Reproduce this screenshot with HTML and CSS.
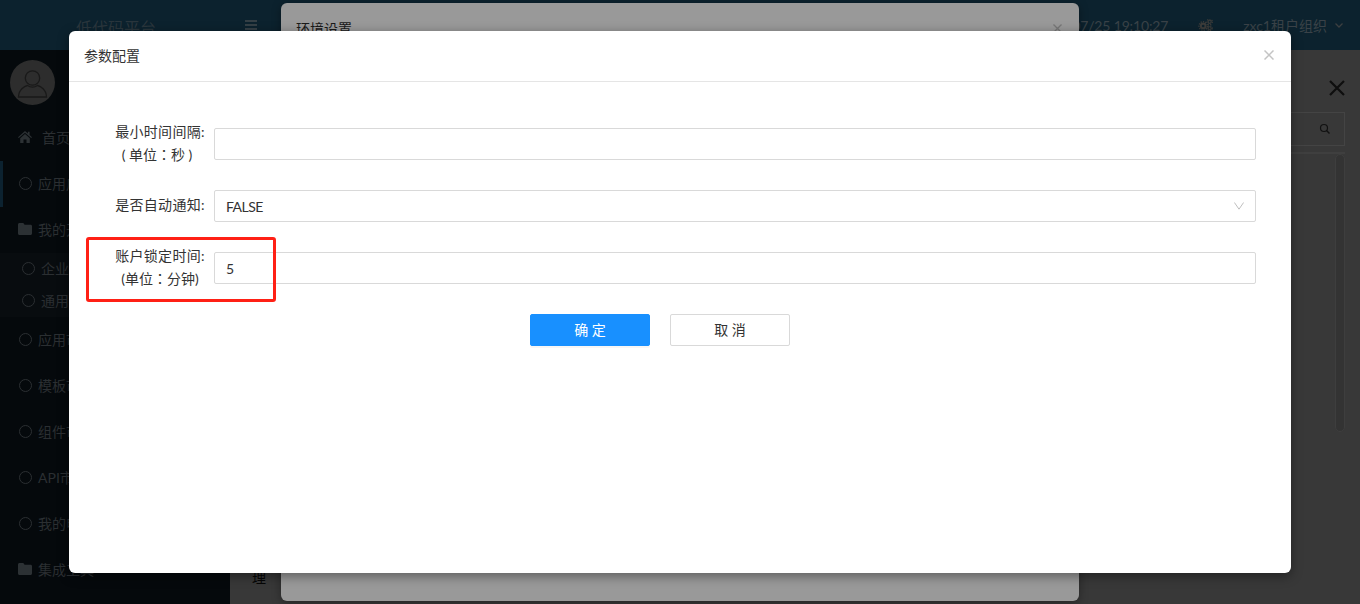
FILE: index.html
```html
<!DOCTYPE html>
<html lang="zh-CN">
<head>
<meta charset="utf-8">
<title>参数配置</title>
<link rel="stylesheet" href="styles.css">
</head>
<body>
<div class="app">
  <header class="topbar">
    <div class="logo">低代码平台</div>
    <div class="burger"><i></i><i></i><i></i></div>
    <div class="spacer"></div>
    <div class="clock">07/25 19:10:27</div>
    <svg class="gear" viewBox="0 0 16 13" width="15" height="12"><g fill="#3c3c3a"><circle cx="5.5" cy="7.500" r="3.600"/><circle cx="12.500" cy="3" r="2.300"/><circle cx="12.500" cy="10" r="2.100"/></g><g fill="none" stroke="#3c3c3a" stroke-width="1.400" stroke-dasharray="1.400 1.200"><circle cx="5.5" cy="7.500" r="4.600"/><circle cx="12.500" cy="3" r="2.900"/><circle cx="12.500" cy="10" r="2.700"/></g><circle cx="5.5" cy="7.500" r="1.400" fill="#0c222e"/><circle cx="12.500" cy="3" r="1" fill="#0c222e"/><circle cx="12.500" cy="10" r="1" fill="#0c222e"/></svg>
    <div class="tenant">zxc1租户组织</div>
    <svg class="tenant-arrow" viewBox="0 0 8 5" width="8" height="5"><path d="M.5.500L4 4 7.500.500" fill="none" stroke="#3c3f40" stroke-width="1.300"/></svg>
  </header>
  <div class="main">
    <aside class="sidebar">
      <div class="user">
        <svg class="avatar" viewBox="0 0 45 45" width="45" height="45"><circle cx="22.500" cy="22.500" r="22.500" fill="#2d2d2d"/><g fill="none" stroke="#191919" stroke-width="1.300"><circle cx="22.500" cy="18" r="7.200"/><path d="M8.500 37c0-7 6-11 9-11.500 3 2 7 2 10 0 3 .5 9 4.500 9 11.500z"/></g></svg>
      </div>
      <nav class="nav">
        <div class="nav-item home"><svg class="ico" viewBox="0 0 14 12" width="14" height="12"><path d="M7 0L0 6.200l.8.800L7 1.800 13.200 7l.8-.8-2.400-2.100V.8h-1.700v1.800zM2.200 7.200V12h3.300V8.500h3V12h3.300V7.200L7 3z" fill="#2c3134"/></svg><span>首页</span></div>
        <div class="nav-item active"><span class="ring"></span><span>应用广场</span></div>
        <div class="nav-item folder"><svg class="ico" viewBox="0 0 14 12" width="14" height="12"><path d="M1.500 0h3.800l1.300 1.700h5.900c.8 0 1.500.6 1.500 1.400v7.400c0 .8-.7 1.500-1.500 1.500h-11C.7 12 0 11.300 0 10.500v-9C0 .7.700 0 1.500 0z" fill="#2c3134"/></svg><span>我的开发</span></div>
        <div class="subnav">
          <div class="sub-item"><span class="ring"></span><span>企业应用</span></div>
          <div class="sub-item"><span class="ring"></span><span>通用应用</span></div>
        </div>
        <div class="nav-item"><span class="ring"></span><span>应用市场</span></div>
        <div class="nav-item"><span class="ring"></span><span>模板市场</span></div>
        <div class="nav-item"><span class="ring"></span><span>组件市场</span></div>
        <div class="nav-item"><span class="ring"></span><span>API市场</span></div>
        <div class="nav-item"><span class="ring"></span><span>我的申请</span></div>
        <div class="nav-item folder"><svg class="ico" viewBox="0 0 14 12" width="14" height="12"><path d="M1.500 0h3.800l1.300 1.700h5.900c.8 0 1.500.6 1.500 1.400v7.400c0 .8-.7 1.500-1.500 1.500h-11C.7 12 0 11.300 0 10.500v-9C0 .7.700 0 1.500 0z" fill="#2c3134"/></svg><span>集成工具</span></div>
      </nav>
    </aside>
    <section class="content">
      <div class="drawer-close"><svg viewBox="0 0 16 16" width="16" height="16"><path d="M1 1l14 14M15 1L1 15" stroke="#0e0e0e" stroke-width="2.200" fill="none"/></svg></div>
      <div class="search"><svg viewBox="0 0 12 12" width="12" height="12"><circle cx="5" cy="5" r="3.500" fill="none" stroke="#111" stroke-width="1.200"/><path d="M7.500 7.500l3 3" stroke="#111" stroke-width="1.400"/></svg></div>
      <div class="rule"></div>
      <div class="scroll-track"></div>
      <div class="tree-text">理</div>
    </section>
  </div>
</div>

<div class="env-modal">
  <div class="env-title">环境设置</div>
  <svg class="env-close" viewBox="0 0 9 9" width="9" height="9"><path d="M.5.500l8 8M8.500.500l-8 8" stroke="#777" stroke-width="1.300" fill="none"/></svg>
</div>

<div class="modal">
  <div class="modal-head">
    <div class="modal-title">参数配置</div>
    <svg class="modal-close" viewBox="0 0 10 10" width="10" height="10"><path d="M.5.500l9 9M9.500.500l-9 9" stroke="#c4c4c4" stroke-width="1.500" fill="none"/></svg>
  </div>
  <form class="modal-body">
    <div class="row">
      <div class="label two-line"><div class="main-line">最小时间间隔:</div><div class="unit-a">( 单位<span class="colon" lang="zh-TW">：</span>秒 )</div></div>
      <div class="control"></div>
    </div>
    <div class="row">
      <div class="label"><div class="main-line">是否自动通知:</div></div>
      <div class="control select"><span class="false-text">FALSE</span><svg viewBox="0 0 10 8" width="10" height="8"><path d="M.4.500L5 7.200 9.600.500" fill="none" stroke="#bfbfbf" stroke-width="1"/></svg></div>
    </div>
    <div class="row">
      <div class="label two-line"><div class="main-line">账户锁定时间:</div><div class="unit-b">(单位<span class="colon" lang="zh-TW">：</span>分钟)</div></div>
      <div class="control"><span>5</span></div>
    </div>
    <div class="actions">
      <div class="btn primary">确 定</div>
      <div class="btn">取 消</div>
    </div>
  </form>
  <div class="highlight"></div>
</div>
</body>
</html>
```
FILE: styles.css
```css
* { box-sizing: border-box; }
html, body { margin: 0; padding: 0; height: 100%; overflow: hidden; }
body {
  width: 1360px;
  height: 604px;
  font-family: "Lato", "Noto Sans CJK SC", sans-serif;
  font-size: 14px;
  background: #383838;
  position: relative;
}
.app { display: flex; flex-direction: column; height: 604px; }

/* dimmed page behind the dialogs */
.topbar {
  height: 50px;
  flex: none;
  display: flex;
  align-items: center;
  background: #0c222e;
  color: #33383b;
}
.logo { width: 230px; padding: 3px 0 0 2px; text-align: center; font-size: 16px; color: #2a363d; }
.burger { width: 12px; margin-left: 15px; display: flex; flex-direction: column; gap: 2px; }
.burger i { display: block; height: 2px; background: #343f45; }
.spacer { flex: 1; }
.clock { font-size: 14px; color: #3a4248; margin-right: 30px; letter-spacing: -.15px; }
.gear { margin-right: 30px; }
.tenant { color: #3a4248; font-size: 14px; margin-right: 8px; }
.tenant-arrow { margin-right: 17px; }

.main { flex: 1; display: flex; min-height: 0; }
.sidebar { width: 230px; flex: none; background: #05090c; color: #2b2f32; }
.user { height: 65px; padding: 10px 10px 0; }
.avatar { display: block; }
.nav-item {
  height: 46px;
  display: flex;
  align-items: center;
  padding: 0 0 2px 16px;
  gap: 6px;
  border-left: 3px solid transparent;
}
.nav-item.home { gap: 10px; }
.nav-item.folder { gap: 6px; }
.nav-item.active { border-left-color: #0c2230; }
.subnav { background: #080c0f; }
.sub-item { height: 32px; display: flex; align-items: center; padding: 0 0 2px 22px; gap: 6px; }
.ring { width: 13px; height: 13px; border: 1px solid #2b2f32; border-radius: 50%; flex: none; }
.ico { flex: none; margin-left: -1px; }

.content { flex: 1; position: relative; background: #383838; }
.drawer-close { position: absolute; left: 1099px; top: 30px; height: 16px; }
.drawer-close svg { display: block; }
.search {
  position: absolute;
  left: 1000px;
  top: 62px;
  width: 115px;
  height: 34px;
  border: 1px solid #444;
  display: flex;
  align-items: center;
  justify-content: flex-end;
  padding-right: 13px;
}
.rule { position: absolute; left: 1000px; top: 102px; width: 115px; height: 2px; background: #3f3f3f; }
.scroll-track {
  position: absolute;
  left: 1105px;
  top: 104px;
  width: 10px;
  height: 278px;
  background: #333;
  border-radius: 5px;
  border: 1px solid #3e3e3e;
}
.tree-text { position: absolute; left: 22px; top: 517px; color: #050505; font-size: 14px; }

.env-modal {
  position: absolute;
  left: 281px;
  top: 3px;
  width: 798px;
  height: 598px;
  background: #999;
  border-radius: 6px;
  box-shadow: 0 2px 10px rgba(0,0,0,.35);
}
.env-title { position: absolute; left: 15px; top: 15px; color: #1a1a1a; font-size: 14px; }
.env-close { position: absolute; left: 772px; top: 21px; }

.modal {
  position: absolute;
  left: 69px;
  top: 31px;
  width: 1222px;
  height: 542px;
  background: #fff;
  border-radius: 6px;
  box-shadow: 0 3px 12px rgba(0,0,0,.4);
  color: #333;
}
.modal-head {
  height: 51px;
  border-bottom: 1px solid #e5e5e5;
  display: flex;
  align-items: center;
  justify-content: space-between;
  padding: 0 17px 2px 15px;
}
.modal-title { font-size: 14px; color: #333; }
.modal-body { padding: 46px 35px 0 0; display: block; }
.row { display: flex; align-items: center; height: 32px; margin-bottom: 30px; }
.label {
  width: 145px;
  flex: none;
  text-align: center;
  line-height: 22px;
  color: #333;
  white-space: nowrap;
  padding: 0 0 2px 37px;
}
.label.two-line { padding-bottom: 1px; }
.main-line { letter-spacing: .3px; }
.unit-a { padding-right: 6px; }
.unit-b { padding-right: 0; }
.colon { font-family: "Noto Sans CJK TC", sans-serif; }
.control {
  flex: 1;
  height: 32px;
  border: 1px solid #d9d9d9;
  border-radius: 2px;
  display: flex;
  align-items: center;
  justify-content: space-between;
  padding: 0 11px;
  font-size: 14px;
  color: #333;
}
.false-text { letter-spacing: -.5px; }
.actions { display: flex; justify-content: center; gap: 20px; margin-right: 5px; }
.btn {
  width: 120px;
  height: 32px;
  border: 1px solid #d9d9d9;
  border-radius: 2px;
  display: flex;
  align-items: center;
  justify-content: center;
  padding-bottom: 2px;
  color: #333;
  background: #fff;
}
.btn.primary { background: #1890ff; border-color: #1890ff; color: #fff; box-shadow: 0 2px 0 rgba(0,0,0,.035); }
.highlight {
  position: absolute;
  left: 17px;
  top: 206px;
  width: 190px;
  height: 65px;
  border: 3px solid #ff2015;
  border-radius: 3px;
}
```
